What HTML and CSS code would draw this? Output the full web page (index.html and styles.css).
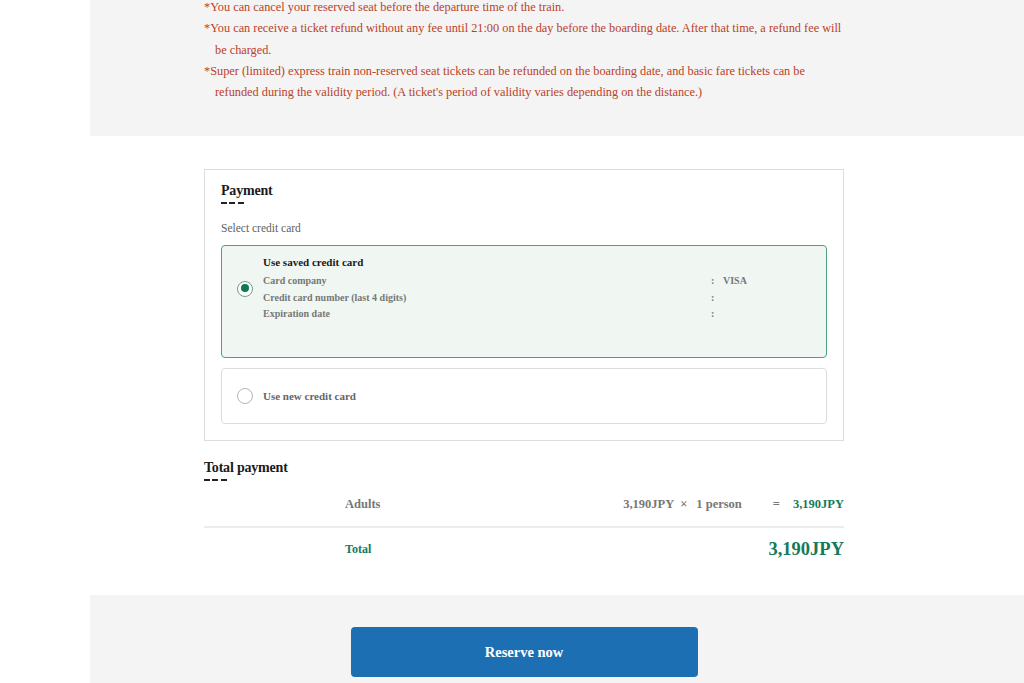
FILE: index.html
```html
<!DOCTYPE html>
<html lang="en">
<head>
<meta charset="utf-8">
<title>Payment</title>
<link rel="stylesheet" href="styles.css">
</head>
<body>
<div class="page">
  <section class="notice">
    <ul class="notes">
      <li>*You can cancel your reserved seat before the departure time of the train.</li>
      <li>*You can receive a ticket refund without any fee until 21:00 on the day before the boarding date. After that time, a refund fee will be charged.</li>
      <li>*Super (limited) express train non-reserved seat tickets can be refunded on the boarding date, and basic fare tickets can be refunded during the validity period. (A ticket's period of validity varies depending on the distance.)</li>
    </ul>
  </section>

  <main class="content">
    <section class="payment">
      <h2 class="heading">Payment</h2>
      <p class="sub">Select credit card</p>

      <div class="option selected">
        <span class="radio checked"></span>
        <div class="option-body">
          <div class="option-title">Use saved credit card</div>
          <dl class="details">
            <dt>Card company</dt><dd class="colon">:</dd><dd>VISA</dd>
            <dt>Credit card number (last 4 digits)</dt><dd class="colon">:</dd><dd></dd>
            <dt>Expiration date</dt><dd class="colon">:</dd><dd></dd>
          </dl>
        </div>
      </div>

      <div class="option plain">
        <span class="radio"></span>
        <span class="option-label">Use new credit card</span>
      </div>
    </section>

    <section class="total">
      <h2 class="heading">Total payment</h2>
      <div class="row">
        <span class="row-label">Adults</span>
        <span class="price">3,190JPY</span>
        <span class="times">×</span>
        <span class="qty">1 person</span>
        <span class="equals">=</span>
        <span class="sum">3,190JPY</span>
      </div>
      <div class="row grand">
        <span class="row-label green">Total</span>
        <span class="grand-sum">3,190JPY</span>
      </div>
    </section>
  </main>

  <section class="action">
    <div class="action-inner">
      <button class="reserve" type="button">Reserve now</button>
    </div>
  </section>
</div>
</body>
</html>
```

FILE: styles.css
```css
* { box-sizing: border-box; }

html, body {
  margin: 0;
  padding: 0;
  background: #ffffff;
  font-family: "Liberation Serif", "Times New Roman", serif;
  color: #222;
}

.page {
  margin-left: 90px;
}

/* Notice area */
.notice {
  background: #f4f4f4;
  padding: 0 0 33px 114px;
}

.notes {
  list-style: none;
  margin: -3px 0 0 0;
  padding: 0;
  width: 640px;
  color: #bb4128;
  font-size: 12.3px;
  line-height: 21.25px;
}

.notes li {
  padding-left: 11px;
  text-indent: -11px;
}

/* Main content */
.content {
  width: 640px;
  margin: 33px 0 0 114px;
}

.payment {
  border: 1px solid #dddddd;
  padding: 13px 16px 16px 16px;
}

.heading {
  margin: 0;
  font-size: 14px;
  line-height: 16px;
  font-weight: bold;
  color: #1a1a1a;
  letter-spacing: -0.2px;
}

.heading::after {
  content: "";
  display: block;
  width: 23px;
  height: 2px;
  margin-top: 3px;
  background: repeating-linear-gradient(90deg, #222 0 6px, transparent 6px 8.5px);
}

.sub {
  margin: 17px 0 10px 0;
  font-size: 11.5px;
  line-height: 14px;
  color: #5f5f5f;
}

.option {
  display: flex;
  align-items: center;
  border: 1px solid #dcdcdc;
  border-radius: 4px;
  padding: 0 15px;
  background: #fff;
}

.option.selected {
  border-color: #4f9e80;
  background: #f0f7f2;
  padding: 9px 15px 35px 15px;
  height: 113px;
}

.option.plain {
  margin-top: 10px;
  height: 56px;
}

.radio {
  flex: none;
  width: 16px;
  height: 16px;
  border-radius: 50%;
  border: 1.5px solid #b4b4b4;
  background: #fff;
  position: relative;
}

.radio.checked {
  border-color: #6aa08c;
}

.radio.checked::after {
  content: "";
  position: absolute;
  left: 2.5px;
  top: 2.5px;
  width: 8px;
  height: 8px;
  border-radius: 50%;
  background: #0e7a53;
}

.option-body {
  flex: 1;
  margin-left: 10px;
}

.option-title {
  font-size: 11px;
  line-height: 14px;
  font-weight: bold;
  color: #1a1a1a;
}

.details {
  display: grid;
  grid-template-columns: 448px 12px 1fr;
  margin: 4px 0 0 0;
  font-size: 10px;
  line-height: 16.5px;
  font-weight: bold;
  color: #777;
}

.details dt,
.details dd {
  margin: 0;
}

.option-label {
  margin-left: 10px;
  font-size: 11px;
  font-weight: bold;
  color: #666;
}

/* Totals */
.total {
  margin-top: 19px;
}

.row {
  display: flex;
  align-items: center;
  font-size: 12.5px;
  font-weight: bold;
  color: #777;
  line-height: 16px;
  padding: 15px 0 14px 0;
  border-bottom: 2px solid #ececec;
}

.row-label {
  margin-left: 141px;
  flex: 1;
}

.times {
  margin: 0 9px 0 6px;
}

.equals {
  margin: 0 13px 0 31px;
}

.sum {
  color: #17795a;
}

.row.grand {
  border-bottom: none;
  padding: 11px 0 0 0;
  line-height: 20px;
}

.green {
  color: #17795a;
  font-size: 12px;
}

.grand-sum {
  color: #17795a;
  font-size: 18.5px;
}

/* Action bar */
.action {
  margin-top: 36px;
  background: #f4f4f4;
  padding: 32px 0 6px 114px;
}

.action-inner {
  width: 640px;
  display: flex;
  justify-content: center;
}

.reserve {
  width: 347px;
  height: 50px;
  border: none;
  border-radius: 4px;
  background: #1d6fb4;
  color: #fff;
  font-family: "Liberation Serif", "Times New Roman", serif;
  font-size: 14.5px;
  font-weight: bold;
  cursor: pointer;
}
```
